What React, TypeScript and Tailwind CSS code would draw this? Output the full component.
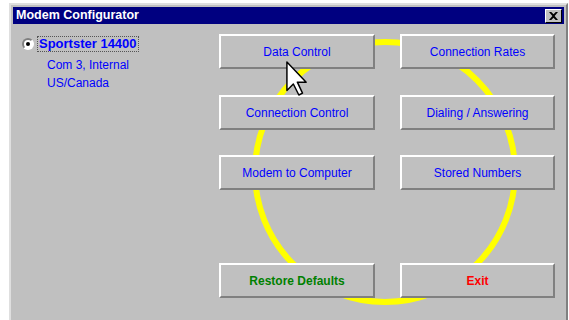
const btn =
  "relative z-10 h-[35px] flex items-center justify-center bg-[#c0c0c0] border-2 border-t-white border-l-white border-r-[#808080] border-b-[#808080] text-[12px]";

function Button({ label, className = "" }: { label: string; className?: string }) {
  return <div className={`${btn} ${className}`}>{label}</div>;
}

export default function App() {
  return (
    <div
      className="h-[320px] w-[569px] overflow-hidden bg-white"
      style={{ fontFamily: '"Liberation Sans", Arial, sans-serif' }}
    >
      <div className="ml-[9px] mt-[3px] h-[340px] w-[559px] border-2 border-t-[#dfdfdf] border-l-[#dfdfdf] border-r-[#808080] border-b-[#808080] bg-[#c0c0c0] p-[2px]">
        {/* title bar */}
        <div className="flex h-[17px] items-center justify-between bg-[#000080] pl-[3px] pr-[2px]">
          <span className="text-[12.5px] font-bold leading-none text-white">Modem Configurator</span>
          <div className="flex h-[14px] w-[17px] items-center justify-center border border-t-white border-l-white border-r-black border-b-black bg-[#c0c0c0]">
            <svg width="9" height="8" viewBox="0 0 8 7">
              <path d="M0 0h2l2 2 2-2h2L5 3.5 8 7H6L4 5 2 7H0l3-3.5z" fill="#000" />
            </svg>
          </div>
        </div>

        {/* content */}
        <div className="relative flex pt-[10px]">
          <svg className="absolute left-0 top-0" width="555" height="300">
            <circle cx="372" cy="148" r="130" fill="none" stroke="#ffff00" strokeWidth="6" />
          </svg>

          <div className="relative w-[206px] pl-[9px] pt-[2px]">
            <div className="flex items-center">
              <div className="flex h-[12px] w-[12px] items-center justify-center rounded-full border-2 border-t-[#808080] border-l-[#808080] border-r-white border-b-white bg-white">
                <div className="h-[4px] w-[4px] rounded-full bg-black" />
              </div>
              <span className="ml-[3px] border border-dotted border-[#555] px-[1px] text-[13px] font-bold leading-[14px] text-[#0000ff]">
                Sportster 14400
              </span>
            </div>
            <div className="ml-[25px] mt-[4px] text-[12px] leading-[18px] text-[#0000ff]">
              <div>Com 3, Internal</div>
              <div>US/Canada</div>
            </div>
          </div>

          <div className="grid grid-cols-[156px_155px] gap-x-[25px]">
            <Button label="Data Control" className="text-[#0000ff]" />
            <Button label="Connection Rates" className="text-[#0000ff]" />
            <Button label="Connection Control" className="mt-[26px] text-[#0000ff]" />
            <Button label="Dialing / Answering" className="mt-[26px] text-[#0000ff]" />
            <Button label="Modem to Computer" className="mt-[25px] text-[#0000ff]" />
            <Button label="Stored Numbers" className="mt-[25px] text-[#0000ff]" />
            <Button label="Restore Defaults" className="mt-[73px] font-bold text-[#008000]" />
            <Button label="Exit" className="mt-[73px] font-bold text-[#ff0000]" />
          </div>

          {/* mouse pointer */}
          <svg className="absolute z-20 left-[273px] top-[37px]" width="22" height="35" viewBox="0 0 12 19">
            <path
              d="M0.5 0.5V16L4 12.5L7 18.5L9 17.5L6.2 11.5H11Z"
              fill="#fff"
              stroke="#000"
              strokeWidth="0.8"
              strokeLinejoin="round"
            />
          </svg>
        </div>
      </div>
    </div>
  );
}
